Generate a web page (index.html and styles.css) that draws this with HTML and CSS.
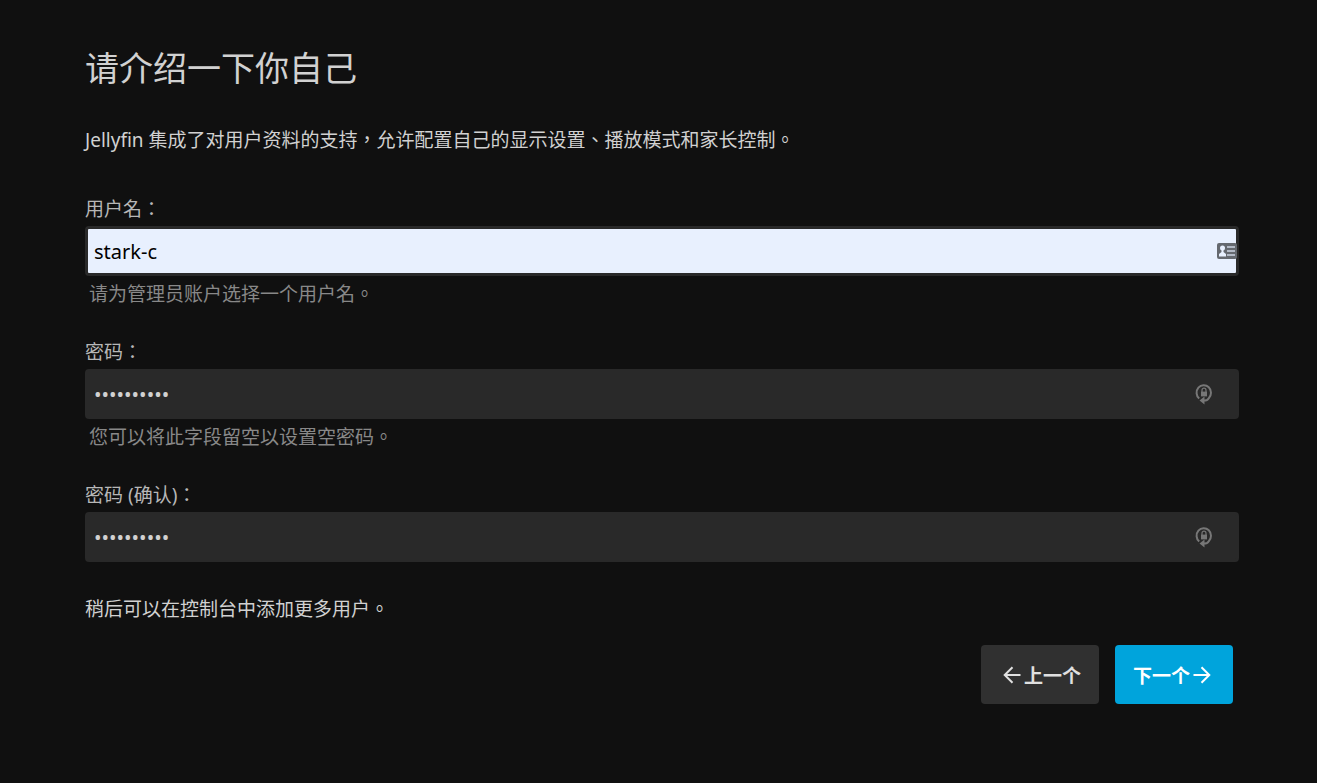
FILE: index.html
```html
<!DOCTYPE html>
<html lang="zh-TW">
<head>
    <meta charset="UTF-8">
    <meta name="viewport" content="width=device-width, initial-scale=1.0">
    <title>Jellyfin</title>
    <link rel="stylesheet" href="styles.css">
</head>
<body>

    <form class="wizard">
        <h1>请介绍一下你自己</h1>
        <p class="intro">Jellyfin 集成了对用户资料的支持，允许配置自己的显示设置、播放模式和家长控制。</p>

        <div class="field">
            <label for="username">用户名：</label>
            <div class="input-wrap">
                <input class="autofilled" type="text" id="username" value="stark-c">
                <svg class="icon-card" viewBox="0 0 20 16">
                    <rect x="0" y="0" width="20" height="16" rx="2" fill="#65696f"/>
                    <path d="M10 4h8M10 8h8M10 12h8" stroke="#b3bac6" stroke-width="2"/>
                    <circle cx="5.5" cy="5" r="2.5" fill="#e8f0fe"/>
                    <path d="M4.500 6h2v3l2.500 2v2.500h-7V11l2.500-2z" fill="#e8f0fe"/>
                </svg>
            </div>
            <div class="description">请为管理员账户选择一个用户名。</div>
        </div>

        <div class="field">
            <label for="password">密码：</label>
            <div class="input-wrap">
                <input type="password" id="password" value="jellyfin10">
                <svg class="icon-lock" viewBox="0 0 18 22">
                    <path d="M4.200 15.600A7.200 7.600 0 1 1 13.800 15.200Q12.400 17.600 9 17.600" fill="none" stroke="#777" stroke-width="2"/>
                    <path d="M4.500 17.600l5-4v8z" fill="#777"/>
                    <rect x="6" y="8.600" width="6" height="4.800" fill="#777"/>
                    <path d="M7 9V7.200a2 2 0 0 1 4 0V9" fill="none" stroke="#777" stroke-width="1.200"/>
                </svg>
            </div>
            <div class="description">您可以将此字段留空以设置空密码。</div>
        </div>

        <div class="field">
            <label for="confirm">密码 (确认)：</label>
            <div class="input-wrap">
                <input type="password" id="confirm" value="jellyfin10">
                <svg class="icon-lock" viewBox="0 0 18 22">
                    <path d="M4.200 15.600A7.200 7.600 0 1 1 13.800 15.200Q12.400 17.600 9 17.600" fill="none" stroke="#777" stroke-width="2"/>
                    <path d="M4.500 17.600l5-4v8z" fill="#777"/>
                    <rect x="6" y="8.600" width="6" height="4.800" fill="#777"/>
                    <path d="M7 9V7.200a2 2 0 0 1 4 0V9" fill="none" stroke="#777" stroke-width="1.200"/>
                </svg>
            </div>
        </div>

        <p class="more-users">稍后可以在控制台中添加更多用户。</p>

        <div class="buttons">
            <button type="button" class="btn btn-prev">
                <svg viewBox="0 0 18 18"><path d="M17.500 9H2M9.500 1.200L1.700 9l7.800 7.800"/></svg>
                <span>上一个</span>
            </button>
            <button type="submit" class="btn btn-next">
                <span>下一个</span>
                <svg viewBox="0 0 18 18"><path d="M.500 9H16M8.500 1.200L16.300 9l-7.800 7.800"/></svg>
            </button>
        </div>
    </form>

</body>
</html>
```
FILE: styles.css
```css
* {
    margin: 0;
    padding: 0;
    box-sizing: border-box;
}

body {
    background-color: #101010;
    color: #d1d1d1;
    font-family: "Noto Sans", "Noto Sans CJK TC", sans-serif;
    font-size: 19px;
    line-height: 28px;
}

.wizard {
    padding: 44px 78px 40px 85px;
}

h1 {
    font-size: 34px;
    font-weight: 400;
    line-height: 48px;
}

.intro {
    margin-top: 34px;
}

.field {
    margin-top: 26px;
}

.intro + .field {
    margin-top: 38px;
}

label {
    display: block;
    line-height: 34px;
    color: #b7b7b7;
}

.input-wrap {
    position: relative;
}

input {
    display: block;
    width: 100%;
    height: 50px;
    padding: 0 6px;
    border: 3px solid #292929;
    border-radius: 4px;
    outline: none;
    background: #292929;
    color: #d1d1d1;
    font-family: inherit;
    font-size: 20px;
}

input.autofilled {
    background: #e8f0fe;
    color: #000;
}

.icon-card,
.icon-lock {
    position: absolute;
    top: 50%;
    transform: translateY(-50%);
}

.icon-card {
    right: 2px;
    width: 20px;
    height: 16px;
}

.icon-lock {
    right: 26px;
    width: 18px;
    height: 22px;
}

.description {
    margin-top: 3px;
    padding-left: 4px;
    line-height: 30px;
    color: #888;
}

.more-users {
    margin-top: 33px;
}

.buttons {
    display: flex;
    justify-content: flex-end;
    gap: 16px;
    margin: 22px 6px 0 0;
}

.btn {
    display: flex;
    align-items: center;
    justify-content: center;
    gap: 3px;
    min-width: 118px;
    height: 59px;
    border: none;
    border-radius: 4px;
    background: #303030;
    color: #e0e0e0;
    font-family: inherit;
    font-size: 19px;
    font-weight: 600;
    cursor: pointer;
}

.btn svg {
    width: 18px;
    height: 18px;
    fill: none;
    stroke: currentColor;
    stroke-width: 2;
}

.btn-prev {
    padding: 0 18px 0 22px;
}

.btn-next {
    padding: 0 22px 0 18px;
    background: #00a4dc;
    color: #fff;
}
```
